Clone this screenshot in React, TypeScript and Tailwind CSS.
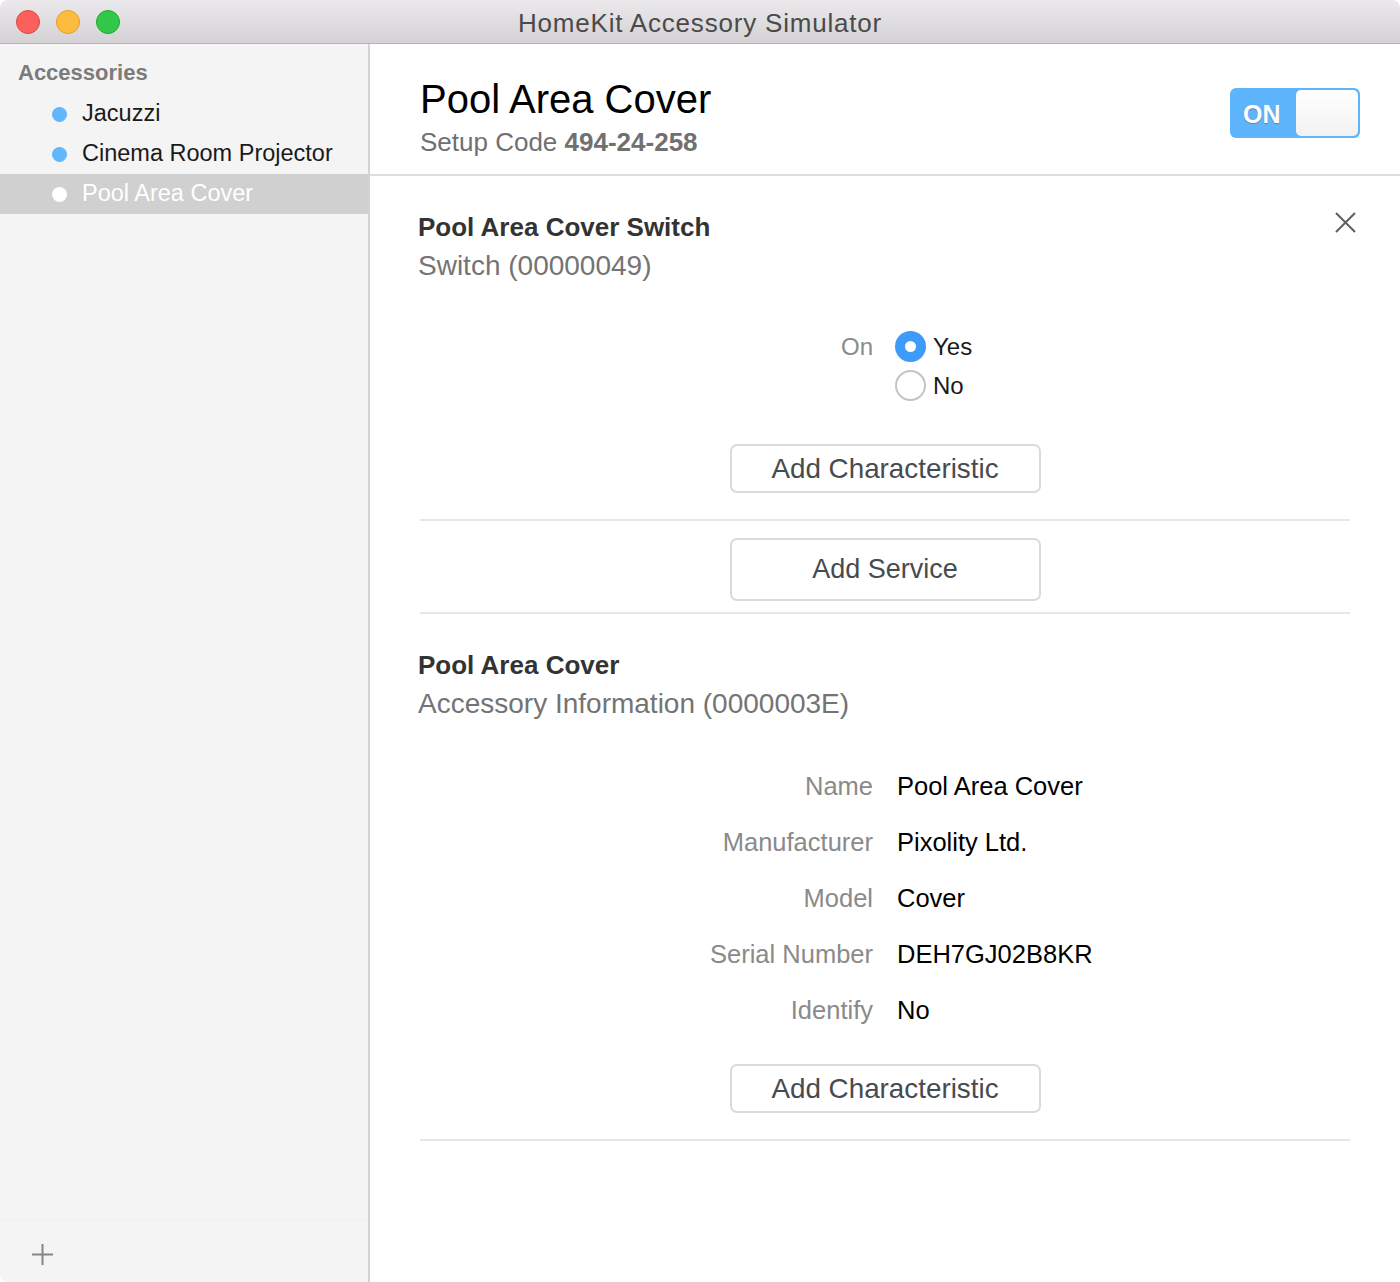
import React from "react";

const font = { fontFamily: '"Liberation Sans", Arial, sans-serif' };

function Radio({ checked }: { checked: boolean }) {
  return checked ? (
    <span className="flex h-[31px] w-[31px] items-center justify-center rounded-full bg-[#3d9bfa]">
      <span className="h-[11px] w-[11px] rounded-full bg-white" />
    </span>
  ) : (
    <span className="h-[31px] w-[31px] rounded-full border-2 border-[#c4c4c4] bg-white" />
  );
}

function Button({ label, tall }: { label: string; tall?: boolean }) {
  return (
    <div className="flex justify-center">
      <div
        className={`flex w-[311px] items-center justify-center rounded-[7px] border-2 border-[#dadada] bg-white text-[#474b50] ${
          tall ? "h-[63px] text-[27px]" : "h-[49px] text-[27.8px]"
        }`}
      >
        {label}
      </div>
    </div>
  );
}

function Sep() {
  return <div className="h-[2px] bg-[#e6e6e6]" />;
}

const info: [string, string][] = [
  ["Name", "Pool Area Cover"],
  ["Manufacturer", "Pixolity Ltd."],
  ["Model", "Cover"],
  ["Serial Number", "DEH7GJ02B8KR"],
  ["Identify", "No"],
];

export default function App() {
  return (
    <div
      style={font}
      className="flex h-[1282px] w-[1400px] flex-col overflow-hidden rounded-[8px] bg-white"
    >
      {/* Title bar */}
      <div className="relative flex h-[44px] shrink-0 items-center justify-center border-b border-[#b5b3b5] bg-gradient-to-b from-[#ebe9eb] to-[#d4d2d4]">
        <div className="absolute left-[16px] top-[10px] flex gap-[16px]">
          <span className="h-[24px] w-[24px] rounded-full border border-[#e0443e] bg-[#fc605c]" />
          <span className="h-[24px] w-[24px] rounded-full border border-[#dea123] bg-[#fdbc40]" />
          <span className="h-[24px] w-[24px] rounded-full border border-[#1aab29] bg-[#34c84a]" />
        </div>
        <span className="pt-[3px] text-[26px] tracking-[0.8px] text-[#4a4a4a]">
          HomeKit Accessory Simulator
        </span>
      </div>

      <div className="flex flex-1">
        {/* Sidebar */}
        <div className="flex w-[370px] shrink-0 flex-col border-r-2 border-[#d4d4d4] bg-[#f4f4f4]">
          <div className="pl-[18px] pt-[15px] text-[22px] font-bold leading-[28px] text-[#7b7b7b]">
            Accessories
          </div>
          <div className="mt-[7px] flex flex-col">
            {[
              ["Jacuzzi", false],
              ["Cinema Room Projector", false],
              ["Pool Area Cover", true],
            ].map(([name, sel]) => (
              <div
                key={name as string}
                className={`flex h-[40px] items-center pl-[52px] ${sel ? "bg-[#d0d0d0]" : ""}`}
              >
                <span
                  className={`h-[15px] w-[15px] rounded-full ${sel ? "bg-white" : "bg-[#62b6fb]"}`}
                />
                <span
                  className={`ml-[15px] text-[23.5px] ${sel ? "text-white" : "text-[#1a1a1a]"}`}
                >
                  {name as string}
                </span>
              </div>
            ))}
          </div>
          <div className="flex-1" />
          <div className="h-px bg-[#f0f0f0]" />
          <div className="flex h-[62px] items-center pl-[32px] pt-[6px]">
            <svg width="21" height="21" viewBox="0 0 21 21">
              <path d="M10.5 0v21M0 10.5h21" stroke="#858585" strokeWidth="2" />
            </svg>
          </div>
        </div>

        {/* Main */}
        <div className="flex flex-1 flex-col">
          {/* Header */}
          <div className="flex h-[132px] shrink-0 items-start justify-between border-b-2 border-[#dcdcdc] pl-[50px] pr-[40px]">
            <div className="pt-[31px]">
              <div className="text-[40px] leading-[48px] text-black">Pool Area Cover</div>
              <div className="mt-[4px] text-[26px] leading-[30px] text-[#707070]">
                Setup Code <span className="font-bold">494-24-258</span>
              </div>
            </div>
            <div className="mt-[44px] flex h-[50px] w-[130px] items-center rounded-[6px] bg-[#5fb5fb] p-[2px]">
              <span className="flex-1 pl-[11px] pt-[3px] text-[25px] font-bold text-white [text-shadow:0_1px_1px_rgba(120,60,80,0.45)]">
                ON
              </span>
              <span className="h-full w-[62px] rounded-[5px] bg-gradient-to-b from-white to-[#f2f2f2]" />
            </div>
          </div>

          {/* Content */}
          <div className="flex flex-col px-[50px]">
            {/* Section 1 */}
            <div className="flex items-start justify-between pt-[35px]">
              <div>
                <div className="-ml-[2px] text-[26px] font-bold leading-[32px] text-[#333333]">
                  Pool Area Cover Switch
                </div>
                <div className="-ml-[2px] mt-[6px] text-[28px] leading-[34px] text-[#747474]">
                  Switch (00000049)
                </div>
              </div>
              <svg width="21" height="21" viewBox="0 0 21 21" className="-mr-[6px] mt-[1px]">
                <path d="M1 1l19 19M20 1L1 20" stroke="#5f5f5f" strokeWidth="2" />
              </svg>
            </div>

            <div className="mt-[44px] grid grid-cols-2 gap-x-[24px]">
              <div className="flex h-[39px] items-center justify-end text-[24px] text-[#8a8a8a]">
                On
              </div>
              <div className="-ml-[2px] flex flex-col">
                <div className="flex h-[39px] items-center gap-[7px] text-[24px] text-[#1a1a1a]">
                  <Radio checked />
                  Yes
                </div>
                <div className="flex h-[39px] items-center gap-[7px] text-[24px] text-[#1a1a1a]">
                  <Radio checked={false} />
                  No
                </div>
              </div>
            </div>

            <div className="mt-[39px]">
              <Button label="Add Characteristic" />
            </div>
            <div className="mt-[26px]">
              <Sep />
            </div>
            <div className="mt-[17px]">
              <Button label="Add Service" tall />
            </div>
            <div className="mt-[11px]">
              <Sep />
            </div>

            {/* Section 2 */}
            <div className="pt-[35px]">
              <div className="-ml-[2px] text-[26px] font-bold leading-[32px] text-[#333333]">
                Pool Area Cover
              </div>
              <div className="-ml-[2px] mt-[6px] text-[28px] leading-[34px] text-[#747474]">
                Accessory Information (0000003E)
              </div>
            </div>

            <div className="mt-[37px] grid grid-cols-2 gap-x-[24px]">
              {info.map(([k, v]) => (
                <React.Fragment key={k}>
                  <div className="flex h-[56px] items-center justify-end text-[25.5px] text-[#8a8a8a]">
                    {k}
                  </div>
                  <div className="flex h-[56px] items-center text-[25.5px] text-black">{v}</div>
                </React.Fragment>
              ))}
            </div>

            <div className="mt-[26px]">
              <Button label="Add Characteristic" />
            </div>
            <div className="mt-[26px]">
              <Sep />
            </div>
          </div>
        </div>
      </div>
    </div>
  );
}
